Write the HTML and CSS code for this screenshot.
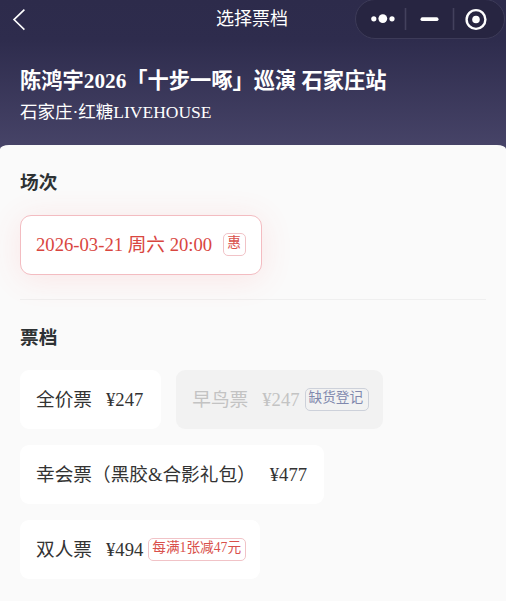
FILE: index.html
```
<!DOCTYPE html>
<html lang="zh-CN">
<head>
    <meta charset="UTF-8">
    <meta name="viewport" content="width=device-width, initial-scale=1.0">
    <title>选择票档</title>
    <link rel="stylesheet" href="styles.css">
</head>
<body>
<header>
    <nav class="navbar">
        <svg class="back" width="14" height="24" viewBox="0 0 14 24">
            <path d="M12.4 1.6 L2 11.6 L12.4 21.6" fill="none" stroke="#fff" stroke-width="1.6"/>
        </svg>
        <h1>选择票档</h1>
        <div class="capsule">
            <svg width="149" height="39" viewBox="0 0 149 39">
                <g fill="#fff">
                    <circle cx="18.8" cy="18.8" r="2.6"/>
                    <circle cx="27.8" cy="18.6" r="4.4"/>
                    <circle cx="37" cy="18.8" r="2.6"/>
                    <rect x="65.5" y="17.3" width="18" height="3.8" rx="1.9"/>
                    <circle cx="121" cy="19.5" r="3.8"/>
                </g>
                <circle cx="121" cy="19.5" r="9.4" fill="none" stroke="#fff" stroke-width="2.4"/>
                <path d="M50.5 8 V30 M98.5 8 V30" stroke="#43415d" stroke-width="1.6"/>
            </svg>
        </div>
    </nav>
    <div class="event">
        <h2>陈鸿宇2026「十步一啄」巡演 石家庄站</h2>
        <p>石家庄·红糖LIVEHOUSE</p>
    </div>
</header>
<main>
    <section class="sessions">
        <h3>场次</h3>
        <div class="options">
            <div class="option selected">
                <span>2026-03-21 周六 20:00</span>
                <span class="tag">惠</span>
            </div>
        </div>
    </section>
    <section class="tickets">
        <h3>票档</h3>
        <div class="options">
            <div class="option">
                <span>全价票</span>
                <span class="price">¥247</span>
            </div>
            <div class="option disabled">
                <span>早鸟票</span>
                <span class="price">¥247</span>
                <span class="tag">缺货登记</span>
            </div>
            <div class="option">
                <span>幸会票（黑胶&amp;合影礼包）</span>
                <span class="price">¥477</span>
            </div>
            <div class="option">
                <span>双人票</span>
                <span class="price">¥494</span>
                <span class="tag">每满1张减47元</span>
            </div>
        </div>
    </section>
</main>
</body>
</html>
```
FILE: styles.css
```
* {
    margin: 0;
    padding: 0;
    box-sizing: border-box;
}
body {
    font-family: "Liberation Serif", "Noto Sans CJK SC", serif;
    background-color: #fafafa;
    color: #333;
    height: 601px;
    overflow: hidden;
}
header {
    height: 155px;
    color: white;
    background: linear-gradient(#2d2b4b 0, #2e2c4d 40px, #474468 150px);
}
.navbar {
    display: grid;
    grid-template-columns: 149px 1fr 150px;
    align-items: center;
    height: 39px;
    padding: 0 1px 0 0;
}
.back {
    margin-left: 12px;
}
.navbar h1 {
    font-size: 18px;
    font-weight: normal;
    line-height: 39px;
    text-align: center;
}
.capsule {
    height: 40px;
    margin-top: -2px;
    border: 1px solid #3d3b58;
    border-radius: 20px;
    background-color: #272541;
}
.capsule svg {
    display: block;
    margin: 0 -1px;
}
.event {
    padding: 27px 20px 0;
}
.event h2 {
    font-size: 21.25px;
    line-height: 30px;
}
.event p {
    font-size: 17.5px;
    line-height: 26px;
    margin-top: 3px;
}
main {
    margin-top: -10px;
    padding: 23px 20px 0;
    height: 456px;
    border-radius: 9px 9px 0 0 / 4px 4px 0 0;
    background-color: #fafafa;
}
h3 {
    font-size: 18.67px;
    line-height: 30px;
    color: #2e3234;
}
.sessions {
    height: 132px;
    border-bottom: 1px solid #efefef;
}
.sessions .options {
    margin-top: 17px;
}
.tickets {
    padding-top: 23px;
}
.tickets .options {
    margin-top: 17px;
}
.options {
    display: flex;
    flex-wrap: wrap;
    gap: 16px 15px;
}
.option {
    display: flex;
    align-items: center;
    height: 59px;
    padding: 0 17px 0 16px;
    border-radius: 9px;
    background-color: white;
    font-size: 18.67px;
    line-height: 28px;
    white-space: nowrap;
}
.option:first-child {
    padding-right: 18px;
}
.price {
    margin-left: 14px;
}
.selected,
.selected:first-child {
    height: 60px;
    padding: 0 15px;
    border: 1px solid #f3bcc1;
    border-radius: 11px;
    color: #d9463f;
    box-shadow: 0 4px 32px rgba(255, 80, 80, 0.12);
}
.disabled {
    background-color: #f2f2f2;
    color: #c3c3c3;
}
.tag {
    height: 23px;
    margin: 0 -3px 0 5px;
    padding: 0 4px 0 3px;
    border: 1px solid #f1c3c7;
    border-radius: 5px;
    color: #d9504b;
    font-size: 13.67px;
    line-height: 17px;
}
.selected .tag {
    margin: 0 0 2px 11px;
}
.disabled .tag {
    border-color: #cdd1da;
    color: #8088ad;
    padding-right: 5px;
}
```
